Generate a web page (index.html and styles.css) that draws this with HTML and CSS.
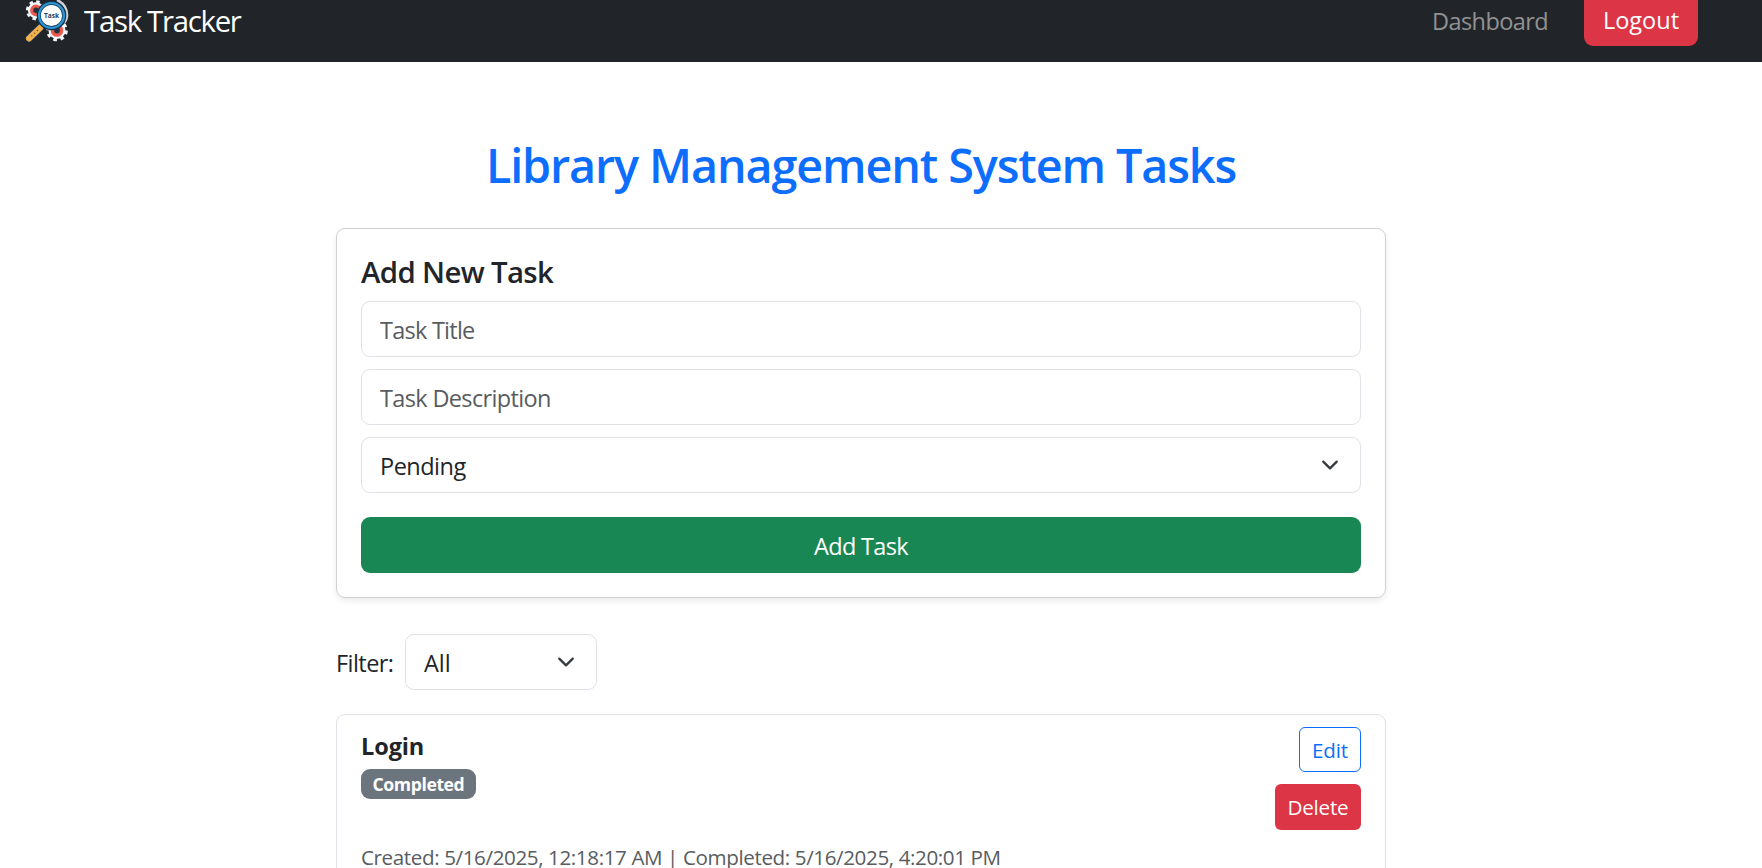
FILE: index.html
```
<!DOCTYPE html>
<html lang="en">
<head>
<meta charset="utf-8">
<title>Task Tracker</title>
<link rel="stylesheet" href="styles.css">
</head>
<body>
<header class="navbar">
  <a class="brand">
    <svg class="logo" width="46" height="44" viewBox="24 0 46 44">
      <g fill="none">
        <circle cx="36" cy="10.3" r="8.6" stroke="#f4f7f9" stroke-width="3" stroke-dasharray="3.4 3.35"/>
        <circle cx="36" cy="10.3" r="6.6" stroke="#f4f7f9" stroke-width="3"/>
        <circle cx="36" cy="10.3" r="4.3" fill="#26343f" stroke="#ee5a4d" stroke-width="3.2"/>
        <circle cx="57" cy="30.5" r="9.2" stroke="#f4f7f9" stroke-width="3.2" stroke-dasharray="3.6 3.62"/>
        <circle cx="57" cy="30.5" r="7" stroke="#f4f7f9" stroke-width="3"/>
        <circle cx="57" cy="30.5" r="4.6" fill="#26343f" stroke="#ee5a4d" stroke-width="3.4"/>
        <path d="M57 0Q67.500 5 67 16Q66.700 20 64.500 22.500" stroke="#cdd3d8" stroke-width="2.600"/>
        <path d="M41 27L29 38.500" stroke="#17304a" stroke-width="8" stroke-linecap="round"/>
        <path d="M40.500 27.500L29 38.500" stroke="#f2b04d" stroke-width="6" stroke-linecap="round"/>
        <path d="M37.500 30.500L29 38.500" stroke="#5c4a36" stroke-width="1.400" stroke-linecap="round" stroke-dasharray="0 3.900"/>
        <circle cx="51.500" cy="15.500" r="12.700" fill="#fff" stroke="#12304a" stroke-width="4.200"/>
        <circle cx="51.500" cy="15.500" r="12.400" stroke="#2d97d3" stroke-width="2.400"/>
      </g>
      <text class="logo-text" x="51.500" y="18" text-anchor="middle">Task</text>
    </svg>
    <span class="brand-name">Task Tracker</span>
  </a>
  <nav class="nav">
    <a class="nav-link">Dashboard</a>
    <button class="logout">Logout</button>
  </nav>
</header>
<main class="container">
  <h2 class="title">Library Management System Tasks</h2>
  <form class="card">
    <h5 class="card-title">Add New Task</h5>
    <input class="control name" placeholder="Task Title">
    <input class="control description" placeholder="Task Description">
    <div class="select">
      <select class="control status"><option>Pending</option></select>
      <svg class="chevron" viewBox="0 0 16 16"><path d="m2 5 6 6 6-6"/></svg>
    </div>
    <button class="add" type="button">Add Task</button>
  </form>
  <div class="filter">
    <label class="filter-label">Filter:</label>
    <div class="select filter-select">
      <select class="control"><option>All</option></select>
      <svg class="chevron" viewBox="0 0 16 16"><path d="m2 5 6 6 6-6"/></svg>
    </div>
  </div>
  <section class="task">
    <div class="task-info">
      <strong class="task-name">Login</strong>
      <span class="badge">Completed</span>
      <p class="dates">Created: 5/16/2025, 12:18:17 AM | Completed: 5/16/2025, 4:20:01 PM</p>
    </div>
    <div class="actions">
      <button class="small edit">Edit</button>
      <button class="small delete">Delete</button>
    </div>
  </section>
</main>
</body>
</html>
```
FILE: styles.css
```
* { box-sizing: border-box; }
html, body { height: 100%; }
body {
  margin: 0;
  overflow: hidden;
  background: #fff;
  color: #212529;
  font: 23.5px/36px "Open Sans", "Noto Sans", sans-serif;
}
button, input, select { font: inherit; color: inherit; margin: 0; }
button { border: 0; padding: 0; }

.navbar {
  display: flex;
  justify-content: space-between;
  align-items: flex-start;
  height: 62px;
  padding: 0 64px 0 24px;
  background: #212529;
}
.brand { display: flex; align-items: flex-start; gap: 14px; color: #fff; }
.logo { display: block; }
.logo-text { font: 700 6.6px "Open Sans", sans-serif; fill: #1d3f5c; }
.brand-name { font-size: 29.4px; line-height: 43px; letter-spacing: -1.3px; }
.nav { display: flex; align-items: flex-start; }
.nav-link { margin-right: 36px; color: #909294; line-height: 42px; letter-spacing: -.6px; }
.logout {
  width: 114px;
  height: 46px;
  padding-bottom: 6px;
  border-radius: 0 0 9px 9px;
  background: #dc3545;
  color: #fff;
  line-height: 40px;
}

.container { width: 1050px; margin: 0 0 0 336px; padding-top: 74px; }
.title {
  margin: 0 0 34px;
  color: #0d6efd;
  font-size: 46.7px;
  font-weight: 560;
  line-height: 58px;
  letter-spacing: -1.1px;
  text-align: center;
}
.card {
  display: flex;
  flex-direction: column;
  gap: 12px;
  height: 370px;
  padding: 24px;
  border: 1px solid #cfd0d1;
  border-radius: 9px;
  box-shadow: 0 3px 6px rgba(0, 0, 0, .075);
}
.card-title { height: 36px; margin: 0; font-size: 29.4px; font-weight: 560; line-height: 38px; letter-spacing: -.65px; }
.control {
  display: block;
  width: 100%;
  height: 56px;
  padding: 2px 18px 0;
  border: 1px solid #dee2e6;
  border-radius: 9px;
  background: #fff;
  appearance: none;
  outline: 0;
}
.control::placeholder { color: #595c5f; opacity: 1; }
.name { letter-spacing: -.75px; }
.description { letter-spacing: -.65px; }
.status { letter-spacing: -.5px; }
.select { position: relative; }
.chevron {
  position: absolute;
  top: 19px;
  right: 22px;
  width: 18px;
  height: 18px;
  fill: none;
  stroke: #343a40;
  stroke-width: 2;
  stroke-linecap: round;
  stroke-linejoin: round;
  pointer-events: none;
}
.add {
  height: 56px;
  margin-top: 12px;
  padding-top: 2px;
  border-radius: 9px;
  background: #198754;
  color: #fff;
  letter-spacing: -.65px;
}

.filter { display: flex; align-items: center; height: 56px; margin: 36px 0 24px; }
.filter-label { width: 69px; padding-top: 2px; letter-spacing: -.55px; }
.filter-select { width: 192px; }

.task {
  display: flex;
  justify-content: space-between;
  height: 154px;
  padding: 12px 24px 0;
  border: 1px solid #dee2e6;
  border-bottom: 0;
  border-radius: 9px 9px 0 0;
}
.task-info { display: flex; flex-direction: column; align-items: flex-start; padding-top: 1px; }
.task-name { letter-spacing: -.1px; }
.badge {
  height: 30px;
  margin-top: 5px;
  padding: 0 11.5px;
  border-radius: 9px;
  background: #6c757d;
  color: #fff;
  font-size: 17.6px;
  font-weight: 700;
  line-height: 30px;
  letter-spacing: -.4px;
}
.dates { height: 26px; margin: 42px 0 0; color: #595c5f; font-size: 20.6px; line-height: 32px; letter-spacing: -.39px; }
.actions { display: flex; flex-direction: column; align-items: flex-end; gap: 12px; }
.small { height: 46px; border-radius: 6px; font-size: 20.6px; line-height: 30px; letter-spacing: -.2px; }
.edit { width: 62px; height: 45px; border: 1px solid #0d6efd; background: #fff; color: #0d6efd; }
.delete { width: 86px; background: #dc3545; color: #fff; }
```
